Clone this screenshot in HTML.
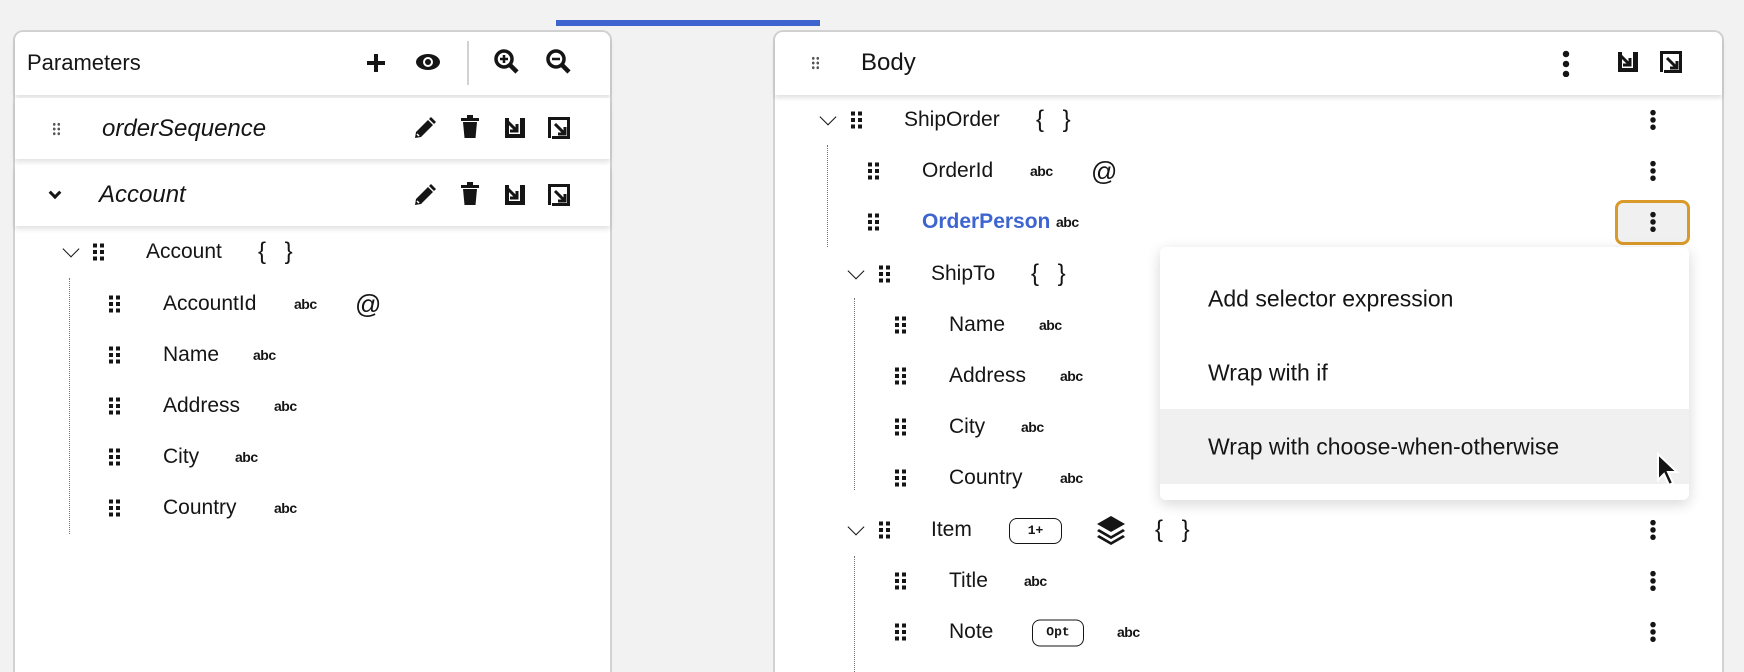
<!DOCTYPE html>
<html><head><meta charset="utf-8"><style>
*{box-sizing:border-box;margin:0;padding:0}
html{width:1744px;height:672px;overflow:hidden}
body{width:1744px;height:672px;background:#f2f2f2;position:relative;overflow:hidden;font-family:"Liberation Sans",sans-serif;color:#151515}
.a{position:absolute}
.panel{background:#fff;border:2px solid #d2d2d2;border-bottom:none;border-radius:10px 10px 0 0}
.t{position:absolute;font-size:21px;line-height:24px;transform:translateY(-50%);white-space:nowrap}
.abc{position:absolute;font-size:14px;font-weight:bold;transform:translateY(-50%);letter-spacing:-0.5px}
.grip{position:absolute;width:11px;height:17px;transform:translateY(-50%);background:linear-gradient(90deg,#151515 4px,transparent 4px,transparent 7px,#151515 7px) 0 0/11px 100%;-webkit-mask:linear-gradient(#000 4px,transparent 4px,transparent 6.5px,#000 6.5px,#000 10.5px,transparent 10.5px,transparent 13px,#000 13px);}
.gripS{position:absolute;width:9px;height:14px;transform:translateY(-50%);background:radial-gradient(circle,#555 1.3px,transparent 1.5px) 0 0/4.5px 4.7px}
.keb{position:absolute;width:6px;height:22px;transform:translate(-50%,-50%);background:radial-gradient(circle,#151515 2.6px,transparent 2.9px) 0 0/6px 7.3px}
.dot{position:absolute;border-left:1.5px dotted #777}
.chev{position:absolute;width:12px;height:12px;border-right:1.6px solid #151515;border-bottom:1.6px solid #151515;transform:translate(-50%,-75%) rotate(45deg)}
.br{position:absolute;font-size:24px;transform:translateY(-50%);letter-spacing:6px}
.row{position:absolute;background:#fff;box-shadow:0 3px 5px rgba(0,0,0,.12)}
.badge{position:absolute;border:1.5px solid #151515;border-radius:8px;font-family:"Liberation Mono",monospace;font-weight:bold;font-size:13px;text-align:center;transform:translateY(-50%)}
.mi{position:absolute;left:48px;font-size:23px;transform:translateY(-50%)}
</style></head><body>
<div class="a" style="left:556px;top:20px;width:264px;height:6px;background:#3e64d0"></div>

<div class="a panel" style="left:13px;top:30px;width:599px;height:642px"></div>
<div class="row" style="left:15px;top:32px;width:595px;height:63px;border-radius:8px 8px 0 0"></div>
<div class="t" style="left:27px;top:63px;font-size:22px">Parameters</div>
<svg class="a" style="left:364px;top:51px" width="24" height="24"><path d="M12 3v18M3 12h18" stroke="#151515" stroke-width="4"/></svg>
<svg class="a" style="left:415px;top:52px" width="26" height="20"><ellipse cx="13" cy="10" rx="12" ry="8" fill="#151515"/><circle cx="13" cy="10" r="5" fill="#fff"/><circle cx="13" cy="10" r="3" fill="#151515"/></svg>
<div class="a" style="left:467px;top:41px;width:2px;height:44px;background:#d2d2d2"></div>
<svg class="a" style="left:494px;top:49px" width="26" height="26"><circle cx="10" cy="10" r="8" stroke="#151515" stroke-width="3.5" fill="none"/><path d="M16 16l7 7" stroke="#151515" stroke-width="4.5"/><path d="M10 6v8M6 10h8" stroke="#151515" stroke-width="2.5"/></svg>
<svg class="a" style="left:546px;top:49px" width="26" height="26"><circle cx="10" cy="10" r="8" stroke="#151515" stroke-width="3.5" fill="none"/><path d="M16 16l7 7" stroke="#151515" stroke-width="4.5"/><path d="M6 10h8" stroke="#151515" stroke-width="2.5"/></svg>

<div class="row" style="left:15px;top:98px;width:595px;height:61px"></div>
<div class="gripS" style="left:52px;top:129px"></div>
<div class="t" style="left:102px;top:129px;font-style:italic;font-size:24px">orderSequence</div>
<div class="row" style="left:15px;top:165px;width:595px;height:61px"></div>
<div class="chev" style="left:55px;top:195px;width:9px;height:9px;border-width:3px"></div>
<div class="t" style="left:99px;top:195px;font-style:italic;font-size:24px">Account</div>
<svg width="0" height="0" style="position:absolute"><defs>
<g id="pen"><path d="M3 23l1-6 12-12 5 5-12 12z" fill="#151515"/><path d="M5 19l2 2" stroke="#fff" stroke-width="1.5"/><path d="M17 4l2-2 5 5-2 2z" fill="#151515"/></g>
<g id="trash"><rect x="2" y="3" width="18" height="3" fill="#151515"/><rect x="8" y="0" width="6" height="3" fill="#151515"/><path d="M4 7h14l-1.5 16h-11z" fill="#151515"/></g>
<g id="imp"><path d="M4 3v20h20V3h-5v16H8V3z" fill="#151515"/><path d="M6 6l10 10M16 9v7H9" stroke="#151515" stroke-width="3" fill="none"/></g>
<g id="exp"><path d="M2 2h22v22H6v-3h15V5H5v18H2z" fill="#151515"/><path d="M9 9l10 10M19 12v7h-7" stroke="#151515" stroke-width="3" fill="none"/></g>
</defs></svg>
<svg class="a" style="left:412px;top:115px" width="26" height="26"><use href="#pen"/></svg>
<svg class="a" style="left:459px;top:115px" width="22" height="26"><use href="#trash"/></svg>
<svg class="a" style="left:501px;top:115px" width="26" height="26"><use href="#imp"/></svg>
<svg class="a" style="left:546px;top:115px" width="26" height="26"><use href="#exp"/></svg>
<svg class="a" style="left:412px;top:182px" width="26" height="26"><use href="#pen"/></svg>
<svg class="a" style="left:459px;top:182px" width="22" height="26"><use href="#trash"/></svg>
<svg class="a" style="left:501px;top:182px" width="26" height="26"><use href="#imp"/></svg>
<svg class="a" style="left:546px;top:182px" width="26" height="26"><use href="#exp"/></svg>

<div class="chev" style="left:71px;top:252px"></div>
<div class="grip" style="left:93px;top:252px"></div>
<div class="t" style="left:146px;top:252px">Account</div>
<div class="br" style="left:258px;top:252px">{ }</div>
<div class="dot" style="left:69px;top:278px;height:256px"></div>
<div class="grip" style="left:109px;top:304px"></div><div class="t" style="left:163px;top:304px">AccountId</div><div class="abc" style="left:294px;top:304px">abc</div><div class="t" style="left:355px;top:304px;font-size:26px">@</div>
<div class="grip" style="left:109px;top:355px"></div><div class="t" style="left:163px;top:355px">Name</div><div class="abc" style="left:253px;top:355px">abc</div>
<div class="grip" style="left:109px;top:406px"></div><div class="t" style="left:163px;top:406px">Address</div><div class="abc" style="left:274px;top:406px">abc</div>
<div class="grip" style="left:109px;top:457px"></div><div class="t" style="left:163px;top:457px">City</div><div class="abc" style="left:235px;top:457px">abc</div>
<div class="grip" style="left:109px;top:508px"></div><div class="t" style="left:163px;top:508px">Country</div><div class="abc" style="left:274px;top:508px">abc</div>

<div class="a panel" style="left:773px;top:30px;width:951px;height:642px"></div>
<div class="row" style="left:775px;top:32px;width:947px;height:63px;border-radius:8px 8px 0 0"></div>
<div class="gripS" style="left:811px;top:63px"></div>
<div class="t" style="left:861px;top:63px;font-size:24px">Body</div>
<div class="keb" style="left:1566px;top:63px;height:28px;background-size:7px 10px;width:7px;background-image:radial-gradient(circle,#151515 3px,transparent 3.4px)"></div>
<svg class="a" style="left:1614px;top:49px" width="26" height="26"><use href="#imp"/></svg>
<svg class="a" style="left:1658px;top:49px" width="26" height="26"><use href="#exp"/></svg>

<div class="chev" style="left:828px;top:120px"></div>
<div class="grip" style="left:851px;top:120px"></div>
<div class="t" style="left:904px;top:120px">ShipOrder</div>
<div class="br" style="left:1036px;top:120px">{ }</div>
<div class="keb" style="left:1653px;top:120px"></div>
<div class="dot" style="left:827px;top:145px;height:102px"></div>
<div class="grip" style="left:868px;top:171px"></div><div class="t" style="left:922px;top:171px">OrderId</div><div class="abc" style="left:1030px;top:171px">abc</div><div class="t" style="left:1091px;top:171px;font-size:26px">@</div>
<div class="keb" style="left:1653px;top:171px"></div>
<div class="grip" style="left:868px;top:222px"></div><div class="t" style="left:922px;top:222px;color:#3e64d0;font-weight:bold">OrderPerson</div><div class="abc" style="left:1056px;top:222px">abc</div>
<div class="a" style="left:1615px;top:200px;width:75px;height:45px;border:3px solid #d99a2a;border-radius:8px;background:#f0f0f0"></div>
<div class="keb" style="left:1653px;top:222px"></div>

<div class="chev" style="left:856px;top:274px"></div>
<div class="grip" style="left:879px;top:274px"></div>
<div class="t" style="left:931px;top:274px">ShipTo</div>
<div class="br" style="left:1031px;top:274px">{ }</div>
<div class="dot" style="left:854px;top:298px;height:192px"></div>
<div class="grip" style="left:895px;top:325px"></div><div class="t" style="left:949px;top:325px">Name</div><div class="abc" style="left:1039px;top:325px">abc</div>
<div class="grip" style="left:895px;top:376px"></div><div class="t" style="left:949px;top:376px">Address</div><div class="abc" style="left:1060px;top:376px">abc</div>
<div class="grip" style="left:895px;top:427px"></div><div class="t" style="left:949px;top:427px">City</div><div class="abc" style="left:1021px;top:427px">abc</div>
<div class="grip" style="left:895px;top:478px"></div><div class="t" style="left:949px;top:478px">Country</div><div class="abc" style="left:1060px;top:478px">abc</div>

<div class="chev" style="left:856px;top:530px"></div>
<div class="grip" style="left:879px;top:530px"></div>
<div class="t" style="left:931px;top:530px">Item</div>
<div class="badge" style="left:1009px;top:531px;width:53px;height:26px;line-height:23px">1+</div>
<svg class="a" style="left:1095px;top:514px" width="32" height="32"><path d="M16 2l14 8-14 8-14-8z" fill="#151515"/><path d="M4 15l12 7 12-7 2 2-14 8-14-8z" fill="#151515"/><path d="M4 21l12 7 12-7 2 2-14 8-14-8z" fill="#151515"/></svg>
<div class="br" style="left:1155px;top:530px">{ }</div>
<div class="keb" style="left:1653px;top:530px"></div>
<div class="dot" style="left:854px;top:556px;height:116px"></div>
<div class="grip" style="left:895px;top:581px"></div><div class="t" style="left:949px;top:581px">Title</div><div class="abc" style="left:1024px;top:581px">abc</div>
<div class="keb" style="left:1653px;top:581px"></div>
<div class="grip" style="left:895px;top:632px"></div><div class="t" style="left:949px;top:632px">Note</div>
<div class="badge" style="left:1032px;top:633px;width:52px;height:27px;line-height:24px">Opt</div>
<div class="abc" style="left:1117px;top:632px">abc</div>
<div class="keb" style="left:1653px;top:632px"></div>

<div class="a" style="left:1160px;top:247px;width:529px;height:253px;background:#fff;border-radius:6px;box-shadow:0 4px 14px rgba(0,0,0,.16)">
<div class="mi" style="top:52px">Add selector expression</div>
<div class="mi" style="top:126px">Wrap with if</div>
<div class="a" style="left:0;top:162px;width:529px;height:75px;background:#f0f0f0"></div>
<div class="mi" style="top:200px">Wrap with choose-when-otherwise</div>
</div>
<svg class="a" style="left:1656px;top:452px" width="24" height="36"><path d="M2 2v26l6-6 5 11 4-2-5-11h9z" fill="#151515" stroke="#fff" stroke-width="2"/></svg>
</body></html>
